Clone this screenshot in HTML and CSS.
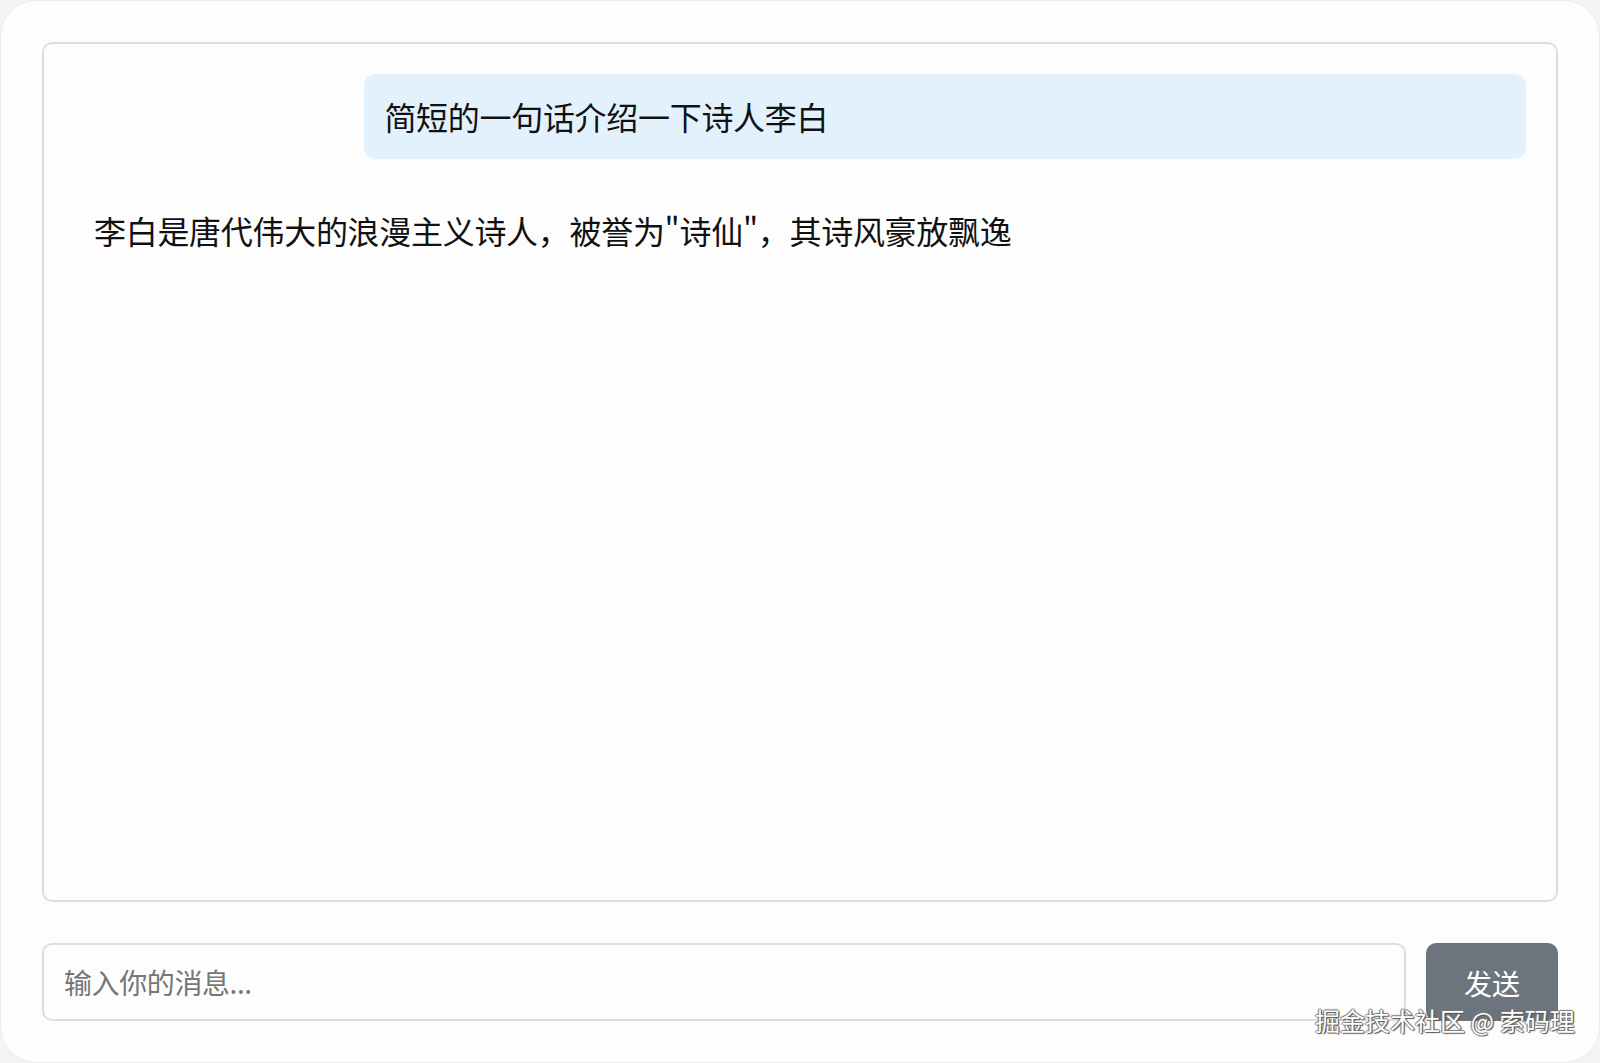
FILE: index.html
```html
<!DOCTYPE html>
<html lang="zh-CN">
<head>
<meta charset="utf-8">
<title>Chat</title>
<link rel="stylesheet" href="styles.css">
</head>
<body>
<div class="frame">
  <div class="chat-box">
    <div class="msg msg-user">简短的一句话介绍一下诗人李白</div>
    <div class="msg msg-bot">李白是唐代伟大的浪漫主义诗人，被誉为"诗仙"，其诗风豪放飘逸</div>
  </div>
  <div class="input-row">
    <input class="msg-input" type="text" placeholder="输入你的消息...">
    <button class="send-btn">发送</button>
  </div>
  <div class="watermark">掘金技术社区 @ 索码理</div>
</div>
</body>
</html>
```

FILE: styles.css
```css
html, body {
  margin: 0;
  padding: 0;
  background: #f4f4f4;
}
body {
  font-family: "Noto Sans CJK SC", "Noto Sans", sans-serif;
  width: 1600px;
  height: 1063px;
  overflow: hidden;
}
.frame {
  position: relative;
  box-sizing: border-box;
  width: 1600px;
  height: 1063px;
  padding: 41px;
  background: #fdfdfd;
  border-radius: 36px;
  border: 1px solid #ececec;
  display: flex;
  flex-direction: column;
  gap: 41px;
}
.chat-box {
  flex: 1;
  box-sizing: border-box;
  border: 2px solid #dedede;
  border-radius: 10px;
  padding: 30px;
  display: flex;
  flex-direction: column;
  gap: 29px;
  background: #fdfdfd;
}
.msg {
  box-sizing: border-box;
  padding: 20px;
  font-size: 32px;
  line-height: 45px;
  letter-spacing: -0.3px;
  color: #111;
  border-radius: 12px;
  max-width: 80%;
}
.msg-user {
  align-self: flex-end;
  width: 80%;
  background: #e3f1fd;
}
.msg-bot {
  align-self: flex-start;
}
.input-row {
  display: flex;
  gap: 20px;
  height: 78px;
}
.msg-input {
  flex: 1;
  box-sizing: border-box;
  height: 78px;
  border: 2px solid #dedede;
  border-radius: 10px;
  padding: 0 20px;
  font-family: "Noto Sans CJK SC", "Noto Sans", sans-serif;
  font-size: 28px;
  letter-spacing: -0.4px;
  background: #fdfdfd;
  color: #333;
  outline: none;
}
.msg-input::placeholder {
  color: #767676;
}
.send-btn {
  box-sizing: border-box;
  width: 132px;
  height: 78px;
  border: none;
  border-radius: 10px;
  background: #6c757d;
  color: #fff;
  font-family: "Noto Sans CJK SC", "Noto Sans", sans-serif;
  font-size: 28px;
  padding: 2px 0 0;
}
.watermark {
  position: absolute;
  left: 1314px;
  top: 1001px;
  font-size: 25px;
  line-height: 36px;
  color: #fff;
  white-space: nowrap;
  text-shadow: 1px 1px 1px #555, -1px 0 1px #777, 0 -1px 1px #777, 1px 0 1px #666;
}
```
